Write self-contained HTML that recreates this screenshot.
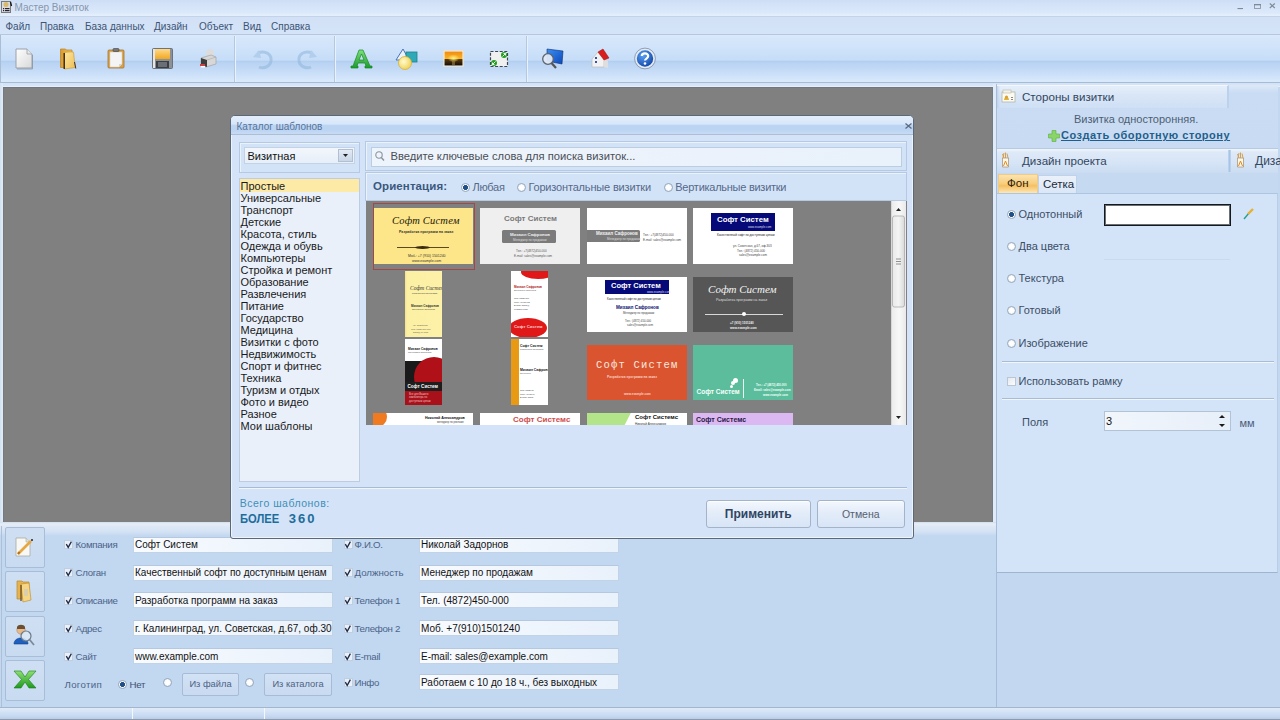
<!DOCTYPE html>
<html><head><meta charset="utf-8">
<style>
*{margin:0;padding:0;box-sizing:border-box}
html,body{width:1280px;height:720px;overflow:hidden}
body{position:relative;background:#c3d7f0;font-family:"Liberation Sans",sans-serif;font-size:11px;color:#000}
.a{position:absolute}
.t{position:absolute;white-space:nowrap;line-height:1}
svg{position:absolute;overflow:visible}
#title{left:0;top:0;width:1280px;height:16px;background:linear-gradient(#cddef5 0,#d4e3f8 5px,#dce9fb 13px,#e5effc 15px)}
#menu{left:0;top:16px;width:1280px;height:19px;background:linear-gradient(#d2e1f6,#d3e3f8 80%,#d6e5f8);border-top:1px solid #c3d4ea}
#menu span{position:absolute;top:5px;color:#3d5474;font-size:10px;line-height:1}
#tb{left:0;top:34px;width:1280px;height:49px;background:linear-gradient(#dce9fa 0,#d7e7fb 2px,#d0e3fa 12px,#c6ddf8 25px,#b3cff0 26.5px,#b9d3f3 28px,#c9def8 38px,#d8e9fc 46px);border-top:1px solid #b5c7dd;border-bottom:1px solid #a7bcd4}
.sep{position:absolute;top:36px;width:1px;height:46px;background:#b3c8e2;box-shadow:1px 0 0 #e9f2fc}
#ws{left:3px;top:87px;width:990px;height:435px;background:#808080;border-top:1px solid #6f767e;border-left:1px solid #737a82;border-right:1px solid #747a82}
#gap1{left:0;top:83px;width:1280px;height:4px;background:linear-gradient(#d3e3f6 0,#d6e5f7 3px,#e6eff9 3px)}
#rp{left:997px;top:85px;width:280px;height:488px;background:#d3e3f8;border-bottom:1px solid #9fb4cf}
#bp{left:0;top:522px;width:997px;height:185px;background:linear-gradient(#d2deec 0,#e6eef8 2px,#dfe9f6 4px,#d3e2f4 10px,#c2d7f0 14px,#c2d7f0 100%);border-right:1px solid #a6bcd8}
.lb{position:absolute;left:5px;width:40px;height:41px;border:1px solid #a9bdd6;border-radius:2px;background:linear-gradient(#cfdff3,#c9dbf1)}
.cb{position:absolute;width:9px;height:9px;background:#e9f0f9;border:1px solid #c0cedf}
.cb svg{left:-0.5px;top:0}
.lbl{position:absolute;white-space:nowrap;line-height:1;font-size:9.7px;color:#4b6488;letter-spacing:-.3px}
.in{position:absolute;height:16px;background:linear-gradient(90deg,#f8fbff,#e9f1fb);border:1px solid #c2d3e8;border-top-color:#b5c8df;overflow:hidden}
.in span{position:absolute;left:1.5px;top:2.7px;font-size:10px;line-height:1;white-space:nowrap;color:#111}
.rd{position:absolute;width:9px;height:9px;border-radius:50%;border:1px solid #98a8bc;background:radial-gradient(#fff 0,#fff 2px,#dde5ef 4.5px)}
.rd.on{background:radial-gradient(#1f4f86 0,#1f4f86 2.2px,#fff 2.7px,#fff 3px,#dde5ef 4.5px)}
.btn2{position:absolute;height:23px;border:1px solid #a8bbd4;border-radius:2px;background:linear-gradient(#d3e2f5,#c8daf1);font-size:9.3px;line-height:21px;text-align:center;color:#4d6282;white-space:nowrap}
#dlg{left:230px;top:115px;width:684px;height:424px;background:#d4e3f7;border:1px solid #5b6878;border-radius:5px 5px 3px 3px;box-shadow:inset 0 0 0 1px #eef4fc}
#dtitle{left:0;top:0;width:682px;height:19px;border-radius:4px 4px 0 0;background:linear-gradient(#e3eefc 0,#d7e6fa 8px,#bcd5f3 9.5px,#bad3f2 13px,#c6dbf5 18px);border-bottom:1px solid #aebfd4}
.grp{position:absolute;border:1px solid #b5c9e2;box-shadow:inset 1px 1px 0 #eaf2fb;background:#d3e3f7}
#gal{left:366px;top:201px;width:541px;height:224px;background:#808080}
.sbar{left:891px;top:201px;width:15px;height:224px;background:linear-gradient(90deg,#ececec,#f8f8f8 50%,#e9e9e9);border-left:1px solid #d8d8d8}
.dbtn{position:absolute;height:28px;border:1px solid #a3b3c8;border-radius:3px;background:linear-gradient(#f4f8fd 0,#e3ecf9 45%,#d8e5f7 100%);box-shadow:inset 0 1px 0 #fbfdff;text-align:center;line-height:26px;white-space:nowrap}
.card{position:absolute;overflow:hidden}
.card *{position:absolute;white-space:nowrap;line-height:1}
#sb{left:0;top:707px;width:1280px;height:13px;background:linear-gradient(#dfeaf8 0,#d3e3f6 4px,#c6d9f2 8px,#bccfe8 10.5px,#8e9aaa 11px);border-top:1px solid #a3b6cd}
</style></head><body>
<div id="title" class="a"></div>
<svg style="left:1px;top:1px" width="11" height="12" viewBox="0 0 11 12">
<rect x="0.5" y="0.5" width="9" height="11" fill="#dcdcdc" stroke="#7a7a7a"/>
<circle cx="5" cy="3.5" r="2.5" fill="#d9b96a"/>
<rect x="2" y="7" width="1.2" height="1.2" fill="#223"/><rect x="4" y="7" width="4.5" height="1.2" fill="#223"/>
<rect x="2" y="9" width="1.2" height="1.2" fill="#223"/><rect x="4" y="9" width="4.5" height="1.2" fill="#223"/>
<path d="M9.5 1 L10.5 5" stroke="#111" stroke-width="1.3"/>
</svg>
<span class="t" style="left:14.5px;top:3px;font-size:10px;color:#8797ac">Мастер Визиток</span>
<svg style="left:1236px;top:3px" width="40" height="8" viewBox="0 0 40 8">
<rect x="1.5" y="5" width="5.5" height="1.1" fill="#7f8a99"/>
<rect x="18.5" y="1.5" width="6" height="4" fill="none" stroke="#8e98a6" stroke-width=".9"/><rect x="18" y="1" width="7" height="1.3" fill="#7f8a99"/>
<path d="M33.8 0.5 L38.8 5 M38.8 0.5 L33.8 5" stroke="#7f8a99" stroke-width="1.1"/>
</svg>
<div id="menu" class="a">
<span style="left:5.5px">Файл</span>
<span style="left:40px">Правка</span>
<span style="left:85px">База данных</span>
<span style="left:154px">Дизайн</span>
<span style="left:199px">Объект</span>
<span style="left:243px">Вид</span>
<span style="left:271px">Справка</span>
</div>
<div id="tb" class="a"></div>
<div class="sep" style="left:234px"></div>
<div class="sep" style="left:334px"></div>
<div class="sep" style="left:526px"></div>
<!-- TOOLBAR ICONS -->
<svg style="left:15px;top:48px" width="18" height="22" viewBox="0 0 18 22">
<defs><linearGradient id="gpage" x1="0" y1="0" x2="1" y2="1"><stop offset="0" stop-color="#ffffff"/><stop offset="1" stop-color="#d8d8d8"/></linearGradient></defs>
<path d="M1 1 H12 L17 6 V20 H1 Z" fill="url(#gpage)" stroke="#9aa0a8" stroke-width="1"/>
<path d="M12 1 V6 H17" fill="#e8e8e8" stroke="#9aa0a8" stroke-width="0.8"/>
<path d="M2 21 H17.5 V7" stroke="#7f8894" stroke-width="1" fill="none" opacity=".6"/>
</svg>
<svg style="left:59px;top:48px" width="19" height="22" viewBox="0 0 19 22">
<defs><linearGradient id="gfold" x1="0" y1="0" x2="1" y2="0"><stop offset="0" stop-color="#d99a2e"/><stop offset="1" stop-color="#f2c65e"/></linearGradient>
<linearGradient id="gfold2" x1="0" y1="0" x2="1" y2="1"><stop offset="0" stop-color="#fbe7a0"/><stop offset="1" stop-color="#eebd55"/></linearGradient></defs>
<path d="M1.5 1 H6.5 L7.5 2 H13 V19.5 H1.5 Z" fill="url(#gfold)" stroke="#b98226" stroke-width=".7"/>
<path d="M5.5 4.5 C9 3.8 12 3.8 14.5 4.2 L16.2 19.5 C12 20.3 9 20.5 5.5 21 Z" fill="url(#gfold2)" stroke="#c8952e" stroke-width=".6"/>
<path d="M5.2 5 V21" stroke="#2a1c0a" stroke-width="1.3"/>
<path d="M15.5 14 L16.8 20.5" stroke="#3a3020" stroke-width="1"/>
</svg>
<svg style="left:107px;top:48px" width="19" height="22" viewBox="0 0 19 22">
<rect x="1" y="2" width="16" height="18" rx="1" fill="#d8a24a" stroke="#a8742a" stroke-width=".8"/>
<path d="M3 4 H15 V16 L12 19 H3 Z" fill="#f4f4f4" stroke="#c9c9c9" stroke-width=".5"/>
<path d="M12 19 L15 16 H12 Z" fill="#d6d6d6"/>
<rect x="6" y="0.5" width="6" height="3" rx="1" fill="#777" stroke="#444" stroke-width=".6"/>
</svg>
<svg style="left:152px;top:48px" width="21" height="21" viewBox="0 0 21 21">
<rect x="0.5" y="0.5" width="20" height="20" rx="1" fill="#8d9196" stroke="#5d6166" stroke-width=".8"/>
<defs><linearGradient id="gsave" x1="0" y1="0" x2="0" y2="1"><stop offset="0" stop-color="#ffd98a"/><stop offset="1" stop-color="#f0a81e"/></linearGradient></defs>
<rect x="3" y="1" width="15" height="10" fill="url(#gsave)"/>
<rect x="1" y="1" width="2" height="19" fill="#e6e6e6"/>
<rect x="4" y="13" width="13" height="7" fill="#3b3f44"/>
<rect x="6" y="14" width="9" height="5" fill="#6a6f75"/>
</svg>
<svg style="left:198px;top:49px" width="20" height="19" viewBox="0 0 20 19">
<ellipse cx="12" cy="4" rx="4" ry="4" fill="#dcdcdc"/>
<path d="M3 9 L13 6 L18 8 V15 L8 18 L3 16 Z" fill="#d7d7d7" stroke="#9a9a9a" stroke-width=".6"/>
<path d="M3 9 L9 11 V18 L3 16 Z" fill="#3d3d3d"/>
<path d="M9 11 L18 8" stroke="#aaa" stroke-width=".6"/>
<rect x="2" y="15" width="5" height="2" fill="#d04040"/>
<rect x="3" y="17" width="4" height="1.5" fill="#fff"/>
</svg>
<svg style="left:251px;top:48px" width="23" height="22" viewBox="0 0 23 22" opacity=".55">
<path d="M7 5 C14 2 21 6 20 13 C19 19 12 21 8 19" fill="none" stroke="#8fb6dc" stroke-width="3"/>
<path d="M2 9 L8 2 L10 10 Z" fill="#9fc1e3"/>
</svg>
<svg style="left:296px;top:48px" width="23" height="22" viewBox="0 0 23 22" opacity=".55">
<path d="M16 5 C9 2 2 6 3 13 C4 19 11 21 15 19" fill="none" stroke="#8fb6dc" stroke-width="3"/>
<path d="M21 9 L15 2 L13 10 Z" fill="#9fc1e3"/>
</svg>
<svg style="left:350px;top:49px" width="23" height="20" viewBox="0 0 23 20">
<defs><linearGradient id="gA" x1="0" y1="0" x2="0" y2="1"><stop offset="0" stop-color="#7ee07e"/><stop offset="1" stop-color="#1c9a2a"/></linearGradient></defs>
<path d="M9 1 H13 L20 17 H22 V19 H15 V17 H16 L15 14 H8 L7 17 H8 V19 H1 V17 H3 Z M9 11 H14 L11.5 5 Z" fill="url(#gA)" stroke="#138a22" stroke-width=".7" fill-rule="evenodd"/>
</svg>
<svg style="left:395px;top:48px" width="24" height="22" viewBox="0 0 24 22">
<path d="M8 1 L1 12 H14 Z" fill="#e9f1fb" stroke="#4a72b8" stroke-width="1"/>
<rect x="11" y="4" width="11" height="10" fill="#2fa8b7" stroke="#1f7f8c" stroke-width=".8"/>
<defs><radialGradient id="gc" cx=".4" cy=".4" r=".6"><stop offset="0" stop-color="#fffbd0"/><stop offset="1" stop-color="#f1d45a"/></radialGradient></defs>
<circle cx="10" cy="15" r="6.5" fill="url(#gc)" stroke="#d5b33a" stroke-width=".8"/>
</svg>
<svg style="left:443px;top:50px" width="21" height="17" viewBox="0 0 21 17">
<defs><linearGradient id="gsun" x1="0" y1="0" x2="0" y2="1"><stop offset="0" stop-color="#f08a12"/><stop offset=".5" stop-color="#f8b42a"/><stop offset=".56" stop-color="#5a3a10"/><stop offset="1" stop-color="#140c04"/></linearGradient>
<radialGradient id="gglow" cx=".5" cy=".55" r=".5"><stop offset="0" stop-color="#fff27a"/><stop offset="1" stop-color="#fff27a" stop-opacity="0"/></radialGradient></defs>
<rect x="0.5" y="0.5" width="20" height="16" fill="#fffdf6" stroke="#e8dcc0" stroke-width=".6"/>
<rect x="1.5" y="1.5" width="18" height="14" fill="url(#gsun)"/>
<ellipse cx="10.5" cy="8" rx="6" ry="4" fill="url(#gglow)"/>
<rect x="9" y="10" width="3" height="5" fill="#a08040" opacity=".6"/>
</svg>
<svg style="left:489px;top:50px" width="21" height="18" viewBox="0 0 21 18">
<rect x="1.5" y="1.5" width="17" height="15" fill="#f0f0f0" stroke="#3e4650" stroke-width="1.2" stroke-dasharray="3 1.6"/>
<circle cx="15" cy="5" r="3" fill="#23a023"/><path d="M13.5 6.5 L16.5 3.5 M14.5 3.5 H16.5 V5.5" stroke="#e8ffe8" stroke-width="1" fill="none"/>
<circle cx="5" cy="13" r="3" fill="#23a023"/><path d="M6.5 11.5 L3.5 14.5 M3.5 12.5 V14.5 H5.5" stroke="#e8ffe8" stroke-width="1" fill="none"/>
</svg>
<svg style="left:541px;top:48px" width="23" height="22" viewBox="0 0 23 22">
<defs><linearGradient id="gmon" x1="0" y1="0" x2="1" y2="1"><stop offset="0" stop-color="#3b90f6"/><stop offset="1" stop-color="#0c48b8"/></linearGradient></defs>
<path d="M6 1 L22 3 L21 16 L6 13 Z" fill="url(#gmon)" stroke="#0a2f70" stroke-width=".6"/>
<circle cx="7" cy="11" r="5.3" fill="#dfe8f6" fill-opacity=".95" stroke="#5d646c" stroke-width="1.3"/>
<path d="M10.5 15 L15 20" stroke="#555" stroke-width="2.2"/>
</svg>
<svg style="left:589px;top:48px" width="21" height="22" viewBox="0 0 21 22">
<path d="M3 11 L9 4 L15 11 V19 H3 Z" fill="#f2f2f2" stroke="#bdbdbd" stroke-width=".7"/>
<path d="M15 11 L19 13 V20 L15 19 Z" fill="#dedede"/>
<path d="M9 4 L14 1 L20 10 L15 12 Z" fill="#d81e1e" stroke="#9a1010" stroke-width=".5"/>
<rect x="6" y="9" width="2" height="2" fill="#3355aa"/>
<rect x="6" y="13" width="2" height="2" fill="#3355aa"/>
</svg>
<svg style="left:634px;top:48px" width="22" height="21" viewBox="0 0 22 21">
<defs><radialGradient id="ghelp" cx=".4" cy=".35" r=".7"><stop offset="0" stop-color="#5aa0f5"/><stop offset="1" stop-color="#0a3fa0"/></radialGradient></defs>
<circle cx="11" cy="10.5" r="9.2" fill="url(#ghelp)" stroke="#e4ebf4" stroke-width="2"/>
<circle cx="11" cy="10.5" r="10.4" fill="none" stroke="#6f8098" stroke-width=".7"/>
<path d="M7.8 8 C7.8 4.5 14.2 4.5 14.2 8 C14.2 10.5 11 10.5 11 12.5" fill="none" stroke="#fff" stroke-width="2.2"/>
<circle cx="11" cy="15.5" r="1.3" fill="#fff"/>
</svg>
<div id="gap1" class="a"></div>
<div class="a" style="left:0;top:83px;width:3px;height:442px;background:linear-gradient(90deg,#d3e1f3,#e2ecf8)"></div>
<div class="a" style="left:0;top:35px;width:1px;height:48px;background:#a9bdd5"></div>
<div id="ws" class="a"></div>
<div id="rp" class="a"></div>
<div class="a" style="left:993px;top:84px;width:3px;height:439px;background:#e0ebf9"></div>
<div class="a" style="left:996px;top:84px;width:1px;height:489px;background:#a9bcd5"></div>
<!-- RIGHT PANEL -->
<div class="a" style="left:997px;top:85px;width:281px;height:64px;background:linear-gradient(#dde9f7 0,#c9dcf3 8px,#c8dbf2 100%)"></div>
<div class="a" style="left:997px;top:85px;width:232px;height:23px;background:linear-gradient(#e6effa 0,#d9e6f7 40%,#cfe0f5 100%);border-top:1px solid #f4f8fd;border-right:2px solid #bcd2ec;box-shadow:inset 3px 0 3px -2px #b7cde9"></div>
<svg style="left:1001px;top:89px" width="15" height="14" viewBox="0 0 15 14">
<rect x="1" y="3" width="13" height="10" fill="#fbfbf4" stroke="#b4b4a4" stroke-width=".8"/>
<rect x="2" y="1" width="8" height="3" fill="#f3f3ea" stroke="#b8b8a8" stroke-width=".6"/>
<path d="M3 11 C3 7 8 7 8 11 Z" fill="#e3b23c"/>
<circle cx="5.5" cy="8" r="1.6" fill="#d9a030"/>
<rect x="10" y="8" width="2" height="1" fill="#888"/><rect x="10" y="10" width="2" height="1" fill="#888"/>
</svg>
<span class="t" style="left:1022px;top:91px;font-size:11.6px;color:#34465e">Стороны визитки</span>
<span class="t" style="left:1074px;top:113.8px;font-size:11px;color:#4d5e74">Визитка односторонняя.</span>
<svg style="left:1048px;top:129.5px" width="12" height="12" viewBox="0 0 12 12">
<path d="M4 0.5 H8 V4 H11.5 V8 H8 V11.5 H4 V8 H0.5 V4 H4 Z" fill="#8ad46a" stroke="#5aae3a" stroke-width=".6"/>
</svg>
<span class="t" style="left:1061px;top:130.3px;font-size:11px;font-weight:bold;color:#1f5f8c;text-decoration:underline;letter-spacing:.5px">Создать оборотную сторону</span>
<div class="a" style="left:997px;top:148px;width:281px;height:25px;background:linear-gradient(#f0f5fc 0,#dfeaf8 3px,#d5e4f6 60%,#cbdcf2 100%);border-top:1px solid #b6cae2"></div>
<div class="a" style="left:1228px;top:150px;width:3px;height:22px;background:linear-gradient(90deg,#c4d8f0,#a7c3e6,#c4d8f0)"></div>
<svg style="left:1001px;top:152px" width="9" height="16" viewBox="0 0 9 16">
<path d="M1.5 6 H7.5 V15 H1.5 Z" fill="#fff7e6" stroke="#a08b70" stroke-width=".7"/>
<path d="M2 6 L3 1 M4.5 6 L4.5 0.5 M7 6 L6 1.5 M3 6 L1.5 2" stroke="#d4a050" stroke-width="1"/>
<path d="M2.5 14 L4.5 9 L6.5 14" stroke="#e08a20" stroke-width="1" fill="none"/>
</svg>
<span class="t" style="left:1022px;top:155px;font-size:11.6px;color:#34465e">Дизайн проекта</span>
<svg style="left:1236px;top:152px" width="9" height="16" viewBox="0 0 9 16">
<path d="M1.5 6 H7.5 V15 H1.5 Z" fill="#fff7e6" stroke="#a08b70" stroke-width=".7"/>
<path d="M2 6 L3 1 M4.5 6 L4.5 0.5 M7 6 L6 1.5 M3 6 L1.5 2" stroke="#d4a050" stroke-width="1"/>
<path d="M2.5 14 L4.5 9 L6.5 14" stroke="#e08a20" stroke-width="1" fill="none"/>
</svg>
<span class="t" style="left:1255px;top:155px;font-size:12px;color:#34465e">Дизайн</span>
<div class="a" style="left:997px;top:173px;width:281px;height:20px;background:#c5d9f1"></div>
<div class="a" style="left:998px;top:174px;width:40px;height:19px;background:linear-gradient(#fbe3b0 0,#f8cf80 45%,#f6c063 60%,#fde7b5 100%);border:1px solid #eecb88;border-bottom:none"></div>
<span class="t" style="left:1007px;top:178px;font-size:11.5px;color:#2b1d10">Фон</span>
<div class="a" style="left:1038px;top:175px;width:39px;height:18px;background:linear-gradient(#eaf1fa,#dae7f7);border:1px solid #bfd2e9;border-bottom:none"></div>
<span class="t" style="left:1043px;top:179px;font-size:11.5px;color:#1d2a3a">Сетка</span>
<div class="a" style="left:997px;top:193px;width:281px;height:380px;background:#d4e4f8;border-top:1px solid #aec5e2;border-right:1px solid #b9cde6;border-bottom:1px solid #9fb4cf"></div>
<div class="a" style="left:1007px;top:210px;width:9px;height:9px;border-radius:50%;background:radial-gradient(#1f4f86 0,#1f4f86 2.2px,#ffffff 2.6px,#ffffff 3px,#dfe6ee 4px);border:1px solid #9aa9ba"></div>
<span class="t" style="left:1018.5px;top:208.5px;font-size:11px;color:#3b4e66">Однотонный</span>
<div class="a" style="left:1104px;top:204px;width:127px;height:22px;background:#fff;border:1px solid #15181c;box-shadow:inset 0 0 0 1px #6a6f76"></div>
<svg style="left:1243px;top:207px" width="12" height="13" viewBox="0 0 12 13">
<path d="M1 12 L6 6" stroke="#2aa090" stroke-width="1.4"/>
<path d="M5 7 L10 2" stroke="#e6b030" stroke-width="2.4"/>
</svg>
<div class="a" style="left:1007px;top:242px;width:9px;height:9px;border-radius:50%;background:radial-gradient(#ffffff 0,#ffffff 2px,#dfe6ee 4px);border:1px solid #9aa9ba"></div>
<span class="t" style="left:1018.5px;top:240.5px;font-size:11px;color:#3b4e66">Два цвета</span>
<div class="a" style="left:1104px;top:259px;width:126px;height:1px;background:#c9d9ee"></div>
<div class="a" style="left:1007px;top:274px;width:9px;height:9px;border-radius:50%;background:radial-gradient(#ffffff 0,#ffffff 2px,#dfe6ee 4px);border:1px solid #9aa9ba"></div>
<span class="t" style="left:1018.5px;top:272.5px;font-size:11px;color:#3b4e66">Текстура</span>
<div class="a" style="left:1007px;top:306px;width:9px;height:9px;border-radius:50%;background:radial-gradient(#ffffff 0,#ffffff 2px,#dfe6ee 4px);border:1px solid #9aa9ba"></div>
<span class="t" style="left:1018.5px;top:305px;font-size:11px;color:#3b4e66">Готовый</span>
<div class="a" style="left:1007px;top:339px;width:9px;height:9px;border-radius:50%;background:radial-gradient(#ffffff 0,#ffffff 2px,#dfe6ee 4px);border:1px solid #9aa9ba"></div>
<span class="t" style="left:1018.5px;top:337.5px;font-size:11px;color:#3b4e66">Изображение</span>
<div class="a" style="left:1002px;top:361px;width:272px;height:2px;background:linear-gradient(#a9bcd3 50%,#f1f6fc 50%)"></div>
<div class="a" style="left:1007px;top:377px;width:9px;height:9px;background:linear-gradient(135deg,#e4e9ef,#fbfcfd);border:1px solid #bcc6d2"></div>
<span class="t" style="left:1018.5px;top:375.5px;font-size:11px;color:#3b4e66">Использовать рамку</span>
<div class="a" style="left:1002px;top:398px;width:272px;height:2px;background:linear-gradient(#a9bcd3 50%,#f1f6fc 50%)"></div>
<span class="t" style="left:1022px;top:416.5px;font-size:11px;color:#3b4e66">Поля</span>
<div class="a" style="left:1104px;top:411px;width:127px;height:20px;background:linear-gradient(90deg,#f1f6fc,#e7eff9);border:1px solid #b3c3d6"></div>
<span class="t" style="left:1106px;top:415.5px;font-size:11px;color:#111">3</span>
<svg style="left:1218px;top:414px" width="8" height="14" viewBox="0 0 8 14">
<path d="M1 4 L4 1 L7 4 Z" fill="#1a1a1a"/><path d="M1 10 L4 13 L7 10 Z" fill="#1a1a1a"/>
</svg>
<span class="t" style="left:1239.5px;top:418px;font-size:11px;color:#4a5d78">мм</span>
<div id="bp" class="a"></div>
<!-- BOTTOM PANEL -->
<div class="a" style="left:1px;top:526px;width:1px;height:181px;background:#adc0d8"></div>
<div class="lb" style="top:527px"></div>
<div class="lb" style="top:571px"></div>
<div class="lb" style="top:616px"></div>
<div class="lb" style="top:660px"></div>
<svg style="left:15px;top:536px" width="20" height="22" viewBox="0 0 20 22">
<path d="M1 2 H11 L15 6 V20 H1 Z" fill="#f8f8f6" stroke="#a9a9a0" stroke-width=".8"/>
<path d="M11 2 V6 H15" fill="#e0e0dc" stroke="#a9a9a0" stroke-width=".6"/>
<path d="M3 18 L16 5" stroke="#e6a640" stroke-width="2.6"/>
<path d="M3 18 L4.5 16" stroke="#b07020" stroke-width="2"/>
<circle cx="17" cy="4" r="1" fill="#222"/>
</svg>
<svg style="left:16px;top:579px" width="17" height="24" viewBox="0 0 17 24">
<path d="M1 2 H6 L7 3 H13 V20 H1 Z" fill="#e8b24c" stroke="#b58a30" stroke-width=".7"/>
<path d="M5 5 L13 4 L15 21 L7 23 Z" fill="#f6d684" stroke="#c29238" stroke-width=".7"/>
<path d="M5 6 V22" stroke="#5a4320" stroke-width="1.2"/>
<rect x="8" y="10" width="4" height="7" fill="#c8c8c8" opacity=".6"/>
</svg>
<svg style="left:13px;top:624px" width="23" height="24" viewBox="0 0 23 24">
<circle cx="8" cy="6" r="4.2" fill="#e9b98a" stroke="#a57b55" stroke-width=".5"/>
<path d="M4 3 C5 0 11 0 12 3 L12 5 L4 5 Z" fill="#6a5030"/>
<path d="M1 20 C1 12 15 12 15 20 Z" fill="#1f5fbf" stroke="#0d3f8a" stroke-width=".6"/>
<circle cx="13" cy="12" r="5" fill="#dce9f5" fill-opacity=".85" stroke="#6a7a8a" stroke-width="1.2"/>
<path d="M16.5 15.5 L21 21" stroke="#7a8a9a" stroke-width="1.8"/>
</svg>
<svg style="left:13px;top:670px" width="24" height="19" viewBox="0 0 24 19">
<defs><linearGradient id="gx" x1="0" y1="0" x2="0" y2="1"><stop offset="0" stop-color="#8ee070"/><stop offset="1" stop-color="#1f9a20"/></linearGradient></defs>
<path d="M1 1 H8 L12 7 L16 1 H23 L15.5 9.5 L23 18 H16 L12 12 L8 18 H1 L8.5 9.5 Z" fill="url(#gx)" stroke="#1b7a1b" stroke-width=".6"/>
</svg>
<div class="cb" style="left:64px;top:540px"><svg width="9" height="10" viewBox="0 0 9 10"><path d="M1.3 3.2 L3.2 6.4 L6.4 0.6" fill="none" stroke="#1d2c48" stroke-width="1.3"/></svg></div>
<span class="lbl" style="left:75.5px;top:540.4px">Компания</span>
<div class="in" style="left:132.5px;top:536.5px;width:200.5px"><span>Софт Систем</span></div>
<div class="cb" style="left:64px;top:568px"><svg width="9" height="10" viewBox="0 0 9 10"><path d="M1.3 3.2 L3.2 6.4 L6.4 0.6" fill="none" stroke="#1d2c48" stroke-width="1.3"/></svg></div>
<span class="lbl" style="left:75.5px;top:568.4px">Слоган</span>
<div class="in" style="left:132.5px;top:564.5px;width:200.5px"><span>Качественный софт по доступным ценам</span></div>
<div class="cb" style="left:64px;top:596px"><svg width="9" height="10" viewBox="0 0 9 10"><path d="M1.3 3.2 L3.2 6.4 L6.4 0.6" fill="none" stroke="#1d2c48" stroke-width="1.3"/></svg></div>
<span class="lbl" style="left:75.5px;top:596.4px">Описание</span>
<div class="in" style="left:132.5px;top:592px;width:200.5px"><span>Разработка программ на заказ</span></div>
<div class="cb" style="left:64px;top:624px"><svg width="9" height="10" viewBox="0 0 9 10"><path d="M1.3 3.2 L3.2 6.4 L6.4 0.6" fill="none" stroke="#1d2c48" stroke-width="1.3"/></svg></div>
<span class="lbl" style="left:75.5px;top:624.4px">Адрес</span>
<div class="in" style="left:132.5px;top:620px;width:200.5px"><span>г. Калининград, ул. Советская, д.67, оф.30</span></div>
<div class="cb" style="left:64px;top:652px"><svg width="9" height="10" viewBox="0 0 9 10"><path d="M1.3 3.2 L3.2 6.4 L6.4 0.6" fill="none" stroke="#1d2c48" stroke-width="1.3"/></svg></div>
<span class="lbl" style="left:75.5px;top:652.4px">Сайт</span>
<div class="in" style="left:132.5px;top:648px;width:200.5px"><span>www.example.com</span></div>
<span class="lbl" style="left:64.5px;top:679.5px;letter-spacing:.3px">Логотип</span>
<div class="rd on" style="left:118px;top:680px"></div>
<span class="lbl" style="left:129.5px;top:679.5px;color:#3d5070">Нет</span>
<div class="rd" style="left:163px;top:678px"></div>
<div class="btn2" style="left:182px;top:673px;width:57px">Из файла</div>
<div class="rd" style="left:245px;top:678px"></div>
<div class="btn2" style="left:264px;top:673px;width:68px">Из каталога</div>
<div class="cb" style="left:343.5px;top:540px"><svg width="9" height="10" viewBox="0 0 9 10"><path d="M1.3 3.2 L3.2 6.4 L6.4 0.6" fill="none" stroke="#1d2c48" stroke-width="1.3"/></svg></div>
<span class="lbl" style="left:354.5px;top:540.4px">Ф.И.О.</span>
<div class="in" style="left:418.5px;top:536.5px;width:200px"><span>Николай Задорнов</span></div>
<div class="cb" style="left:343.5px;top:568px"><svg width="9" height="10" viewBox="0 0 9 10"><path d="M1.3 3.2 L3.2 6.4 L6.4 0.6" fill="none" stroke="#1d2c48" stroke-width="1.3"/></svg></div>
<span class="lbl" style="left:354.5px;top:568.4px;letter-spacing:0">Должность</span>
<div class="in" style="left:418.5px;top:564.5px;width:200px"><span>Менеджер по продажам</span></div>
<div class="cb" style="left:343.5px;top:596px"><svg width="9" height="10" viewBox="0 0 9 10"><path d="M1.3 3.2 L3.2 6.4 L6.4 0.6" fill="none" stroke="#1d2c48" stroke-width="1.3"/></svg></div>
<span class="lbl" style="left:354.5px;top:596.4px">Телефон 1</span>
<div class="in" style="left:418.5px;top:592px;width:200px"><span>Тел. (4872)450-000</span></div>
<div class="cb" style="left:343.5px;top:624px"><svg width="9" height="10" viewBox="0 0 9 10"><path d="M1.3 3.2 L3.2 6.4 L6.4 0.6" fill="none" stroke="#1d2c48" stroke-width="1.3"/></svg></div>
<span class="lbl" style="left:354.5px;top:624.4px">Телефон 2</span>
<div class="in" style="left:418.5px;top:620px;width:200px"><span>Моб. +7(910)1501240</span></div>
<div class="cb" style="left:343.5px;top:652px"><svg width="9" height="10" viewBox="0 0 9 10"><path d="M1.3 3.2 L3.2 6.4 L6.4 0.6" fill="none" stroke="#1d2c48" stroke-width="1.3"/></svg></div>
<span class="lbl" style="left:354.5px;top:652.4px">E-mail</span>
<div class="in" style="left:418.5px;top:648px;width:200px"><span>E-mail: sales@example.com</span></div>
<div class="cb" style="left:343.5px;top:678px"><svg width="9" height="10" viewBox="0 0 9 10"><path d="M1.3 3.2 L3.2 6.4 L6.4 0.6" fill="none" stroke="#1d2c48" stroke-width="1.3"/></svg></div>
<span class="lbl" style="left:354.5px;top:678.4px">Инфо</span>
<div class="in" style="left:418.5px;top:674px;width:200px"><span>Работаем с 10 до 18 ч., без выходных</span></div>
<div id="sb" class="a"></div>
<div class="a" style="left:132px;top:708px;width:1px;height:11px;background:#f4f8fd"></div>
<div class="a" style="left:264px;top:708px;width:1px;height:11px;background:#f4f8fd"></div>
<!-- DIALOG -->
<div id="dlg" class="a">
<div id="dtitle" class="a"></div>
<span class="t" style="left:5.5px;top:6.3px;font-size:10px;color:#58749a">Каталог шаблонов</span>
<svg style="left:674px;top:6.5px" width="7" height="6" viewBox="0 0 7 6"><path d="M0.5 0.5 L6.5 5.5 M6.5 0.5 L0.5 5.5" stroke="#5a6a80" stroke-width="1.3"/></svg>
</div>
<div class="grp" style="left:239px;top:142px;width:121px;height:31px"></div>
<div class="a" style="left:244px;top:147px;width:111px;height:17px;background:linear-gradient(#f3f7fc,#e6eef9);border:1px solid #c3d2e5"></div>
<span class="t" style="left:247.5px;top:151px;font-size:11px;color:#111">Визитная</span>
<div class="a" style="left:338px;top:149px;width:15px;height:13px;background:linear-gradient(#e2eaf4,#c9d6e6);border:1px solid #b0bfd2"></div>
<svg style="left:343px;top:154px" width="5" height="3" viewBox="0 0 5 3"><path d="M0 0 H5 L2.5 3 Z" fill="#222"/></svg>
<div class="a" style="left:239px;top:178px;width:121px;height:304px;background:#e9f0fa;border:1px solid #bccde2"></div>
<div class="a" style="left:240px;top:179px;width:119px;height:13px;background:#fdeaa6"></div>
<div class="a" style="left:240.5px;top:180.2px;font-size:11px;line-height:12px;color:#1a1a1a;white-space:nowrap">Простые<br>Универсальные<br>Транспорт<br>Детские<br>Красота, стиль<br>Одежда и обувь<br>Компьютеры<br>Стройка и ремонт<br>Образование<br>Развлечения<br>Питание<br>Государство<br>Медицина<br>Визитки с фото<br>Недвижимость<br>Спорт и фитнес<br>Техника<br>Туризм и отдых<br>Фото и видео<br>Разное<br>Мои шаблоны</div>
<div class="grp" style="left:365px;top:141px;width:542px;height:30px"></div>
<div class="a" style="left:370.5px;top:146.5px;width:531px;height:20px;background:linear-gradient(90deg,#eef4fb,#e9f1fb);border:1px solid #bccde1"></div>
<svg style="left:375px;top:151px" width="10" height="11" viewBox="0 0 10 11"><circle cx="4" cy="4" r="3.2" fill="none" stroke="#8a949e" stroke-width="1.1"/><path d="M6.3 6.5 L9 9.5" stroke="#8a949e" stroke-width="1.4"/></svg>
<span class="t" style="left:390.5px;top:151px;font-size:11.2px;color:#4a4f57">Введите ключевые слова для поиска визиток...</span>
<div class="grp" style="left:365px;top:172px;width:542px;height:29px"></div>
<span class="t" style="left:373px;top:181.3px;font-size:11.5px;font-weight:bold;color:#3b587e;letter-spacing:.1px">Ориентация:</span>
<div class="rd on" style="left:461px;top:182.5px"></div>
<span class="t" style="left:472.5px;top:181.8px;font-size:11px;letter-spacing:-.3px;color:#55698a">Любая</span>
<div class="rd" style="left:517px;top:182.5px"></div>
<span class="t" style="left:528.4px;top:181.8px;font-size:11px;letter-spacing:-.17px;color:#55698a">Горизонтальные визитки</span>
<div class="rd" style="left:663.5px;top:182.5px"></div>
<span class="t" style="left:675.3px;top:181.8px;font-size:11px;letter-spacing:-.26px;color:#55698a">Вертикальные визитки</span>
<div id="gal" class="a"></div>
<div class="sbar a"></div>
<!-- GALLERY CARDS -->
<div class="a" style="left:372.5px;top:203px;width:102px;height:67px;border:1.5px solid #a34848;background:#808080"></div>
<div class="card" style="left:374px;top:208px;width:99px;height:56px;background:#fde689">
<i style="left:18px;top:7px;font:italic 10.5px 'Liberation Serif';color:#1a1408;letter-spacing:.2px">Софт Систем</i>
<i style="left:25px;top:22px;font:bold 3.6px 'Liberation Sans';color:#333">Разработка программ на заказ</i>
<i style="left:23px;top:39px;width:52px;height:1px;background:#5a4a20"></i>
<i style="left:41px;top:37.5px;width:15px;height:3px;border-radius:50%;background:#3a2a10"></i>
<i style="left:34px;top:45.5px;font:3.5px 'Liberation Sans';color:#333">Моб.: +7 (910) 1501240</i>
<i style="left:38px;top:50.5px;font:3.5px 'Liberation Sans';color:#333">www.example.com</i>
</div>
<div class="card" style="left:480px;top:208px;width:100px;height:56px;background:#efefef">
<i style="left:24px;top:6px;font:bold 8px 'Liberation Sans';color:#7a7a7a">Софт Систем</i>
<i style="left:22px;top:22px;width:54px;height:13px;border-radius:1.5px;background:#7b7b7b"></i>
<i style="left:30px;top:24px;font:bold 4.3px 'Liberation Sans';color:#eee">Михаил Сафронов</i>
<i style="left:33px;top:29.5px;font:3px 'Liberation Sans';color:#ddd">Менеджер по продажам</i>
<i style="left:36px;top:41px;font:3px 'Liberation Sans';color:#555">Тел.: +7(4872)450-000</i>
<i style="left:34px;top:46px;font:3px 'Liberation Sans';color:#555">E-mail: sales@example.com</i>
</div>
<div class="card" style="left:587px;top:208px;width:100px;height:56px;background:#fff">
<i style="left:0;top:22px;width:53px;height:12px;border-radius:0 1.5px 1.5px 0;background:#7b7b7b"></i>
<i style="left:9px;top:23px;font:bold 4.5px 'Liberation Sans';color:#f0f0f0">Михаил Сафронов</i>
<i style="left:20px;top:29px;font:3px 'Liberation Sans';color:#ddd">Менеджер по продажам</i>
<i style="left:56px;top:25px;font:3px 'Liberation Sans';color:#444">Тел.: +7(4872)450-000</i>
<i style="left:56px;top:29.5px;font:3px 'Liberation Sans';color:#444">E-mail: sales@example.com</i>
</div>
<div class="card" style="left:693px;top:208px;width:100px;height:56px;background:#fff">
<i style="left:18px;top:5px;width:63.5px;height:17.5px;background:#050a78"></i>
<i style="left:24px;top:7px;font:bold 7.8px 'Liberation Sans';color:#fff">Софт Систем</i>
<i style="left:55px;top:16.5px;font:2.8px 'Liberation Sans';color:#dde">www.example.com</i>
<i style="left:24px;top:24.5px;font:3px 'Liberation Sans';color:#222">Качественный софт по доступным ценам</i>
<i style="left:40px;top:36px;font:3px 'Liberation Sans';color:#444">ул. Советская, д.67, оф.303</i>
<i style="left:44px;top:40.5px;font:3px 'Liberation Sans';color:#444">Тел.: (4872) 450-000</i>
<i style="left:46px;top:45px;font:3px 'Liberation Sans';color:#444">sales@example.com</i>
</div>
<div class="card" style="left:405px;top:271px;width:36.5px;height:65.5px;background:linear-gradient(90deg,#f4e08a 0,#fcf0a4 2px,#fdf1a8 100%)">
<i style="left:5px;top:14px;font:italic 5.5px 'Liberation Serif';color:#333">Софт Систем</i>
<i style="left:7px;top:21px;font:2.5px 'Liberation Sans';color:#444">Разработка программ</i>
<i style="left:6px;top:33px;font:bold 3px 'Liberation Sans';color:#333">Михаил Сафронов</i>
<i style="left:7px;top:37px;font:2.5px 'Liberation Sans';color:#444">менеджер проектов</i>
<i style="left:8px;top:53px;font:2.3px 'Liberation Sans';color:#555">ул. Советская</i>
<i style="left:6px;top:56.5px;font:2.3px 'Liberation Sans';color:#555">Тел.(4872)450-000</i>
<i style="left:8px;top:60px;font:2.3px 'Liberation Sans';color:#555">sales@ex.com</i>
</div>
<div class="card" style="left:405px;top:339px;width:36.5px;height:66px;background:#fff">
<i style="left:0;top:22px;width:37px;height:44px;background:#1a1a1a"></i>
<i style="left:9px;top:18px;width:40px;height:40px;border-radius:50%;background:#b01018"></i>
<i style="left:0;top:43px;width:37px;height:9px;background:#1e1e1e"></i>
<i style="left:2.5px;top:44.5px;font:bold 4.6px 'Liberation Sans';color:#fff">Софт Систем</i>
<i style="left:0;top:52px;width:37px;height:14px;background:#a8101a"></i>
<i style="left:4px;top:53.5px;font:2.6px 'Liberation Sans';color:#f4c0c0">Все для Вашего</i>
<i style="left:4px;top:57px;font:2.6px 'Liberation Sans';color:#f4c0c0">компьютера по</i>
<i style="left:4px;top:60.5px;font:2.6px 'Liberation Sans';color:#f4c0c0">доступным ценам</i>
<i style="left:3px;top:8px;font:bold 3.2px 'Liberation Sans';color:#111">Михаил Сафронов</i>
<i style="left:3px;top:12px;font:2.5px 'Liberation Sans';color:#444">Менеджер проектов</i>
</div>
<div class="card" style="left:511px;top:271px;width:37px;height:65.5px;background:#fff">
<i style="left:10px;top:-6px;width:34px;height:14px;border-radius:50%;background:#e01818"></i>
<i style="left:3px;top:14px;font:bold 3px 'Liberation Sans';color:#b01818">Михаил Сафронов</i>
<i style="left:3px;top:18px;font:2.4px 'Liberation Sans';color:#555">менеджер проектов</i>
<i style="left:3px;top:26px;font:2.3px 'Liberation Sans';color:#333">Тел.(4872)450</i>
<i style="left:3px;top:29.5px;font:2.3px 'Liberation Sans';color:#333">Моб.+7(910)15</i>
<i style="left:3px;top:33px;font:2.3px 'Liberation Sans';color:#333">E-mail: sales@</i>
<i style="left:3px;top:36.5px;font:2.3px 'Liberation Sans';color:#333">example.com</i>
<i style="left:-2px;top:47px;width:38px;height:20px;border-radius:50%;background:#e01818"></i>
<i style="left:3px;top:53px;font:bold 4.3px 'Liberation Sans';color:#fbd0d0">Софт Систем</i>
</div>
<div class="card" style="left:511px;top:339px;width:37px;height:66px;background:#fff">
<i style="left:0;top:0;width:7.5px;height:66px;background:#e99a14"></i>
<i style="left:9px;top:5px;font:bold 3.4px 'Liberation Sans';color:#111">Софт Систем</i>
<i style="left:9px;top:9px;font:2.3px 'Liberation Sans';color:#555">Разработка программ</i>
<i style="left:9px;top:29px;font:bold 3.4px 'Liberation Sans';color:#111">Михаил Сафронов</i>
<i style="left:9px;top:33px;font:2.3px 'Liberation Sans';color:#555">менеджер</i>
<i style="left:9px;top:50px;font:2.3px 'Liberation Sans';color:#333">Тел.(4872)45</i>
<i style="left:9px;top:53.5px;font:2.3px 'Liberation Sans';color:#333">Моб.+7(910)1</i>
<i style="left:9px;top:57px;font:2.3px 'Liberation Sans';color:#333">E-mail: sales</i>
</div>
<div class="card" style="left:587px;top:277px;width:100px;height:55px;background:#fff">
<i style="left:18px;top:2.5px;width:64px;height:14.5px;background:#050a78"></i>
<i style="left:24px;top:4px;font:bold 7.5px 'Liberation Sans';color:#fff">Софт Систем</i>
<i style="left:60px;top:12.5px;font:2.8px 'Liberation Sans';color:#dde">www.example.com</i>
<i style="left:20px;top:19.5px;font:2.8px 'Liberation Sans';color:#222">Качественный софт по доступным ценам</i>
<i style="left:29px;top:27.5px;font:bold 4.6px 'Liberation Sans';color:#0a1070">Михаил Сафронов</i>
<i style="left:36px;top:33.5px;font:2.8px 'Liberation Sans';color:#444">Менеджер по продажам</i>
<i style="left:38px;top:41.5px;font:2.8px 'Liberation Sans';color:#444">Тел.: (4872) 450-000</i>
<i style="left:40px;top:46px;font:2.8px 'Liberation Sans';color:#444">sales@example.com</i>
</div>
<div class="card" style="left:693px;top:277px;width:100px;height:55px;background:#565656">
<i style="left:15px;top:6px;font:italic 11px 'Liberation Serif';color:#f4f4f4">Софт Систем</i>
<i style="left:23px;top:21px;font:3.6px 'Liberation Sans';color:#ddd">Разработка программ на заказ</i>
<i style="left:12px;top:37px;width:78px;height:1px;background:#d8d8d8"></i>
<i style="left:48.5px;top:35px;width:4px;height:4px;border-radius:50%;background:#fff"></i>
<i style="left:37px;top:44px;font:bold 3px 'Liberation Sans';color:#eee">+7 (910) 1501240</i>
<i style="left:37px;top:49px;font:bold 3px 'Liberation Sans';color:#eee">www.example.com</i>
</div>
<div class="card" style="left:587px;top:345px;width:100px;height:55px;background:#da5430">
<i style="left:9px;top:14px;font:10.5px 'Liberation Mono';color:#fbe9df;letter-spacing:1.2px">Софт Систем</i>
<i style="left:20px;top:30px;font:bold 3.3px 'Liberation Sans';color:#fcd0c0">Разработка программ на заказ</i>
<i style="left:37px;top:47px;font:bold 3px 'Liberation Sans';color:#fcd0c0">www.example.com</i>
</div>
<div class="card" style="left:693px;top:345px;width:100px;height:55px;background:#5bbd9c">
<i style="left:3.5px;top:43px;font:bold 6.5px 'Liberation Sans';color:#f5fffb">Софт Систем</i>
<i style="left:38px;top:36px;width:4px;height:4px;border-radius:50%;background:#fff"></i>
<i style="left:40px;top:33px;width:5px;height:5px;border-radius:50%;background:#fff"></i>
<i style="left:36.5px;top:40px;width:3px;height:3px;border-radius:50%;background:#fff"></i>
<i style="left:49.5px;top:34px;width:1px;height:19px;background:#e8f8f2"></i>
<i style="left:63px;top:38px;font:bold 2.8px 'Liberation Sans';color:#f0fff8">Тел.: +7 (4872) 450-000</i>
<i style="left:61px;top:43px;font:bold 2.8px 'Liberation Sans';color:#f0fff8">Email: sales@example.com</i>
<i style="left:70px;top:47.5px;font:bold 2.8px 'Liberation Sans';color:#f0fff8">www.example.com</i>
</div>
<div class="card" style="left:373px;top:412.5px;width:100px;height:12.5px;background:#fff">
<i style="left:-6px;top:-6px;width:20px;height:20px;border-radius:50%;background:#ef7a20"></i>
<i style="left:52px;top:3px;font:bold 3.6px 'Liberation Sans';color:#111">Николай Александров</i>
<i style="left:64px;top:8.5px;font:2.6px 'Liberation Sans';color:#444">менеджер по рекламе</i>
</div>
<div class="card" style="left:480px;top:412.5px;width:100px;height:12.5px;background:#fff">
<i style="left:33px;top:2px;font:bold 8px 'Liberation Sans';color:#cf4d4d">Софт Системс</i>
</div>
<div class="card" style="left:587px;top:412.5px;width:100px;height:12.5px;background:#fff">
<i style="left:0;top:0;width:44px;height:13px;background:#b4e48a;clip-path:polygon(0 0,100% 0,85% 100%,0 100%)"></i>
<i style="left:48px;top:1.5px;font:bold 6px 'Liberation Sans';color:#111">Софт Системс</i>
<i style="left:48px;top:9px;font:3px 'Liberation Sans';color:#333">Николай Александров</i>
</div>
<div class="card" style="left:693px;top:412.5px;width:100px;height:12.5px;background:#dcb8f2">
<i style="left:3px;top:3px;font:bold 7px 'Liberation Sans';color:#2a1a48">Софт Системс</i>
</div>
<svg style="left:891px;top:201px" width="15" height="224" viewBox="0 0 15 224">
<defs><linearGradient id="gthumb" x1="0" y1="0" x2="1" y2="0"><stop offset="0" stop-color="#e9e9e9"/><stop offset=".5" stop-color="#f4f4f4"/><stop offset="1" stop-color="#d9d9d9"/></linearGradient></defs>
<path d="M5 10 L7.5 7 L10 10 Z" fill="#222"/>
<rect x="1.5" y="15" width="12" height="91" rx="2" fill="url(#gthumb)" stroke="#a9a9a9" stroke-width=".8"/>
<path d="M5 58 H10 M5 60.5 H10 M5 63 H10" stroke="#777" stroke-width=".8"/>
<path d="M5 215 L7.5 218 L10 215 Z" fill="#222"/>
</svg>
<div class="a" style="left:239px;top:487px;width:668px;height:2px;background:linear-gradient(#a9bbd2 50%,#eff5fc 50%)"></div>
<span class="t" style="left:239.7px;top:498px;font-size:10.5px;color:#3f8fb8;letter-spacing:.5px">Всего шаблонов:</span>
<span class="t" style="left:239.7px;top:512px;font-size:13px;font-weight:bold;color:#1d6d9c;transform:scaleX(.86);transform-origin:0 0">БОЛЕЕ</span>
<span class="t" style="left:288.7px;top:512px;font-size:13px;font-weight:bold;color:#1d6d9c;letter-spacing:2.1px">360</span>
<div class="dbtn" style="left:706px;top:500px;width:104.5px"><b style="color:#2f4562;font-size:12px">Применить</b></div>
<div class="dbtn" style="left:816.5px;top:500px;width:88.5px"><span style="color:#56616f;font-size:10.5px">Отмена</span></div>
</body></html>
